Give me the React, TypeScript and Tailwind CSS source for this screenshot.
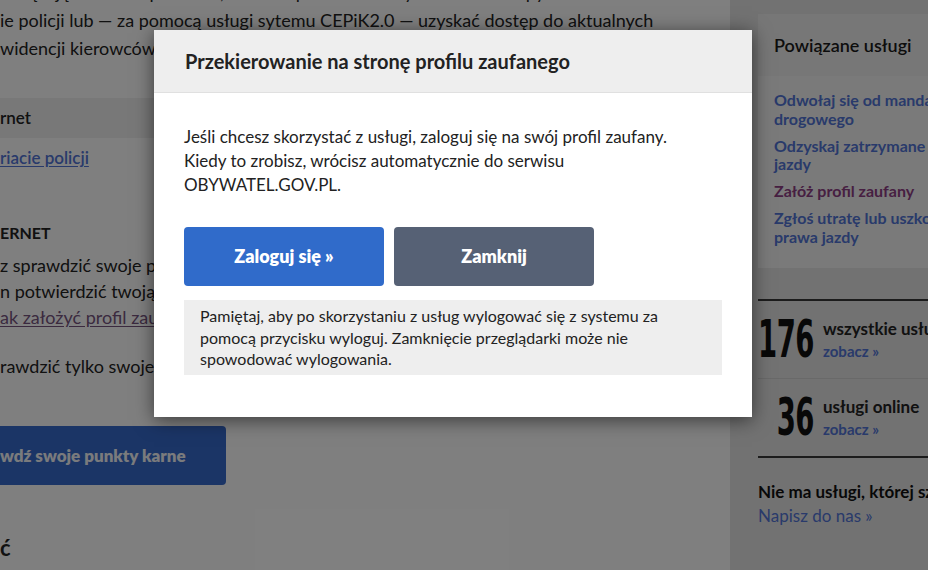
import React from "react";

const services = [
  ["Odwołaj się od mandatu karnego", "drogowego"],
  ["Odzyskaj zatrzymane prawo", "jazdy"],
  ["Załóż profil zaufany"],
  ["Zgłoś utratę lub uszkodzenie", "prawa jazdy"],
];

function Stat({ value, label }: { value: string; label: string }) {
  return (
    <div className="flex items-center h-[77px]">
      <div className="w-[56px] shrink-0 flex justify-end">
        <span className="inline-block font-['Liberation_Sans_Narrow','DejaVu_Sans_Condensed',sans-serif] font-bold text-[51px] leading-none text-[#111] tracking-[-1px] scale-x-[0.6] origin-right">
          {value}
        </span>
      </div>
      <div className="pl-[9px] flex flex-col leading-[23px]">
        <span className="text-[17px] font-bold text-[#222] whitespace-nowrap">{label}</span>
        <span className="text-[15px] font-bold text-[#5275d6]">zobacz »</span>
      </div>
    </div>
  );
}

export default function App() {
  return (
    <div className="relative w-[928px] h-[570px] overflow-hidden bg-white font-['Lato',sans-serif] text-[#222]">
      <div className="flex h-full">
        {/* main column */}
        <div className="w-[730px] shrink-0 whitespace-nowrap overflow-hidden">
          <div className="-mt-[22px] text-[18px] leading-[28px]">
            <div>owiązują? Chcesz sprawdzić, ile masz punktów karnych? Możesz zapytać o nie w</div>
            <div>ie policji lub — za pomocą usługi sytemu CEPiK2.0 — uzyskać dostęp do aktualnych</div>
            <div>widencji kierowców i pojazdów.</div>
          </div>

          <div className="mt-[36px] h-[40px] bg-[#f0f0f0] flex items-center text-[17px] font-semibold">
            rnet
          </div>
          <div className="mt-[8px] leading-[24px] text-[17px] font-semibold text-[#5275d6] underline underline-offset-2">
            riacie policji
          </div>

          <div className="mt-[51px] leading-[24px] text-[16px] font-bold">ERNET</div>
          <div className="mt-[7px] text-[18px] leading-[26px]">
            <div>z sprawdzić swoje punkty karne</div>
            <div>n potwierdzić twoją tożsamość</div>
            <div className="text-[#76557f] underline underline-offset-2">ak założyć profil zaufany</div>
          </div>
          <div className="mt-[23px] text-[18px] leading-[26px]">rawdzić tylko swoje punkty karne.</div>

          <div className="mt-[47px] w-[226px] h-[59px] rounded-r-[4px] bg-[#366acc] flex items-center text-[17px] font-extrabold text-[#f4f6fa]">
            wdź swoje punkty karne
          </div>

          <div className="mt-[48px] text-[22px] leading-[30px] font-bold">ć</div>
        </div>

        {/* sidebar */}
        <div className="w-[260px] shrink-0 bg-[#e4e4e4] pl-[28px] pt-[14px]">
          <div className="bg-[#eeeeee] h-[62px] pl-[16px] flex items-center text-[18px] font-semibold text-[#1a1a1a] whitespace-nowrap">
            Powiązane usługi
          </div>
          <div className="bg-[#f4f4f4] pl-[16px] pt-[15px] pb-[22px] flex flex-col gap-[8.5px] text-[16px] font-bold leading-[18.5px] whitespace-nowrap">
            {services.map((s, i) => (
              <div key={i} className={i === 2 ? "text-[#8e3f85]" : "text-[#5275d6]"}>
                {s.map((line, j) => (
                  <div key={j}>{line}</div>
                ))}
              </div>
            ))}
          </div>

          <div className="mt-[31px] border-t-2 border-[#383838]">
            <Stat value="176" label="wszystkie usługi" />
            <div className="border-t border-[#d2d2d2]" />
            <Stat value="36" label="usługi online" />
          </div>
          <div className="border-t-2 border-[#383838]" />
          <div className="mt-[22px] leading-[24px] text-[17px] whitespace-nowrap">
            <div className="font-bold text-[#111]">Nie ma usługi, której szukasz?</div>
            <div className="text-[#5275d6]">Napisz do nas »</div>
          </div>
        </div>
      </div>

      {/* overlay */}
      <div className="absolute inset-0 bg-black/50" />

      {/* modal */}
      <div className="absolute left-[154px] top-[30px] w-[598px] bg-white shadow-[0_3px_18px_rgba(0,0,0,0.55)]">
        <div className="h-[63px] bg-[#eeeeee] border-b border-[#e0e0e0] pl-[31px] flex items-center text-[20px] font-bold text-[#222]">
          Przekierowanie na stronę profilu zaufanego
        </div>
        <div className="px-[30px] pt-[32px] pb-[42px]">
          <p className="text-[17px] leading-[24px] text-[#222]">
            Jeśli chcesz skorzystać z usługi, zaloguj się na swój profil zaufany.
            <br />
            Kiedy to zrobisz, wrócisz automatycznie do serwisu
            <br />
            OBYWATEL.GOV.PL.
          </p>
          <div className="mt-[30px] flex gap-[10px]">
            <button className="w-[200px] h-[59px] rounded-[4px] bg-[#306bca] text-white text-[18px] font-extrabold">
              Zaloguj się »
            </button>
            <button className="w-[200px] h-[59px] rounded-[4px] bg-[#566175] text-white text-[18px] font-extrabold">
              Zamknij
            </button>
          </div>
          <div className="mt-[14px] bg-[#eeeeee] px-[16px] py-[5px] text-[16px] leading-[21.5px] text-[#222]">
            Pamiętaj, aby po skorzystaniu z usług wylogować się z systemu za
            <br />
            pomocą przycisku wyloguj. Zamknięcie przeglądarki może nie
            <br />
            spowodować wylogowania.
          </div>
        </div>
      </div>
    </div>
  );
}
